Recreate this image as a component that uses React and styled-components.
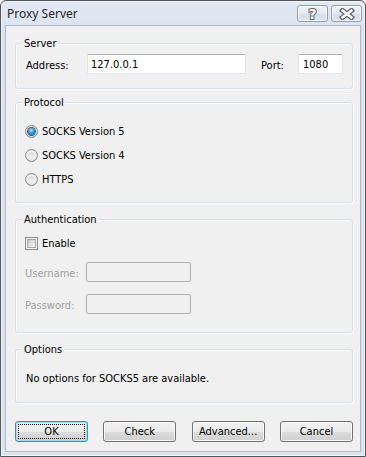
import React from 'react';
import styled, { createGlobalStyle, css } from 'styled-components';

const GlobalStyle = createGlobalStyle`
  html, body {
    margin: 0;
    padding: 0;
    width: 366px;
    height: 457px;
    overflow: hidden;
    background: #ffffff;
  }
`;

const uiFont = `'DejaVu Sans Condensed', 'DejaVu Sans', sans-serif`;

const Window = styled.div`
  width: 366px;
  height: 457px;
  box-sizing: border-box;
  border: 1px solid #50565e;
  border-radius: 6px 6px 0 0;
  background: linear-gradient(#e2eaf4, #d9e3ef 30px, #d9e3ef);
  box-shadow: inset 0 0 0 1px rgba(255, 255, 255, 0.65);
  display: flex;
  flex-direction: column;
  font-family: ${uiFont};
  font-size: 11px;
  color: #000;
`;

const TitleBar = styled.div`
  height: 24px;
  flex: none;
  display: flex;
  align-items: flex-start;
  padding: 0 3px 0 6px;
`;

const Title = styled.div`
  flex: 1;
  margin-top: 5px;
  font-family: 'Noto Sans', 'Open Sans', sans-serif;
  font-size: 12px;
  line-height: 16px;
  color: #262626;
`;

const CaptionButtons = styled.div`
  display: flex;
  gap: 3px;
  margin-top: 4px;
`;

const CaptionButton = styled.div`
  width: 31px;
  height: 17px;
  box-sizing: border-box;
  border: 1px solid #8f9eb1;
  border-radius: 3px;
  background: linear-gradient(#f1f5fa, #e1e8f1 50%, #d6dfea 51%, #dce4ee);
  box-shadow: inset 0 0 0 1px rgba(255, 255, 255, 0.7);
  display: flex;
  align-items: center;
  justify-content: center;
`;

const HelpGlyph = styled.span`
  font-family: 'DejaVu Sans', sans-serif;
  font-weight: bold;
  font-size: 14px;
  line-height: 14px;
  color: #ffffff;
  -webkit-text-stroke: 2px #5c6470;
  paint-order: stroke fill;
`;

const Client = styled.div`
  flex: 1;
  margin: 0 4px 4px 4px;
  border: 1px solid #aebbcb;
  background: #f0f0f0;
  padding: 17px 7px 0 9px;
  display: flex;
  flex-direction: column;
`;

const GroupBox = styled.div`
  box-sizing: border-box;
  height: ${(p) => p.$h}px;
  margin-top: ${(p) => p.$top || 0}px;
  border: 1px solid #d5dfe5;
  border-radius: 3px;
  box-shadow: inset 1px 1px 0 #ffffff, 1px 1px 0 #ffffff;
  padding: 0 9px 0 9px;
  display: flex;
  flex-direction: column;
`;

const Legend = styled.div`
  align-self: flex-start;
  height: 13px;
  line-height: 13px;
  margin: -7px 0 0 -3px;
  padding: 0 2px;
  background: #f0f0f0;
`;

const Row = styled.div`
  display: flex;
  align-items: center;
  height: ${(p) => p.$h || 20}px;
  margin-top: ${(p) => p.$top || 0}px;
`;

const Label = styled.div`
  width: ${(p) => p.$w}px;
  margin-left: ${(p) => p.$left || 0}px;
  margin-top: 2px;
  flex: none;
  color: ${(p) => (p.$disabled ? '#a0a0a0' : '#000')};
`;

const TextBox = styled.input`
  box-sizing: border-box;
  width: ${(p) => p.$w}px;
  height: ${(p) => p.$h || 20}px;
  margin: 0;
  padding: 1px 0 0 ${(p) => p.$pad || 3}px;
  font-family: ${uiFont};
  font-size: 11px;
  color: #000;
  border: 1px solid;
  border-color: #abadb3 #e2e3ea #e3e9ef #e2e3ea;
  border-radius: 2px;
  background: #ffffff;
  outline: none;
  &:disabled {
    border-color: #adb2b5;
    background: #f0f0f0;
  }
`;

const OptionList = styled.div`
  margin-top: 10px;
`;

const OptionRow = styled.label`
  display: flex;
  align-items: center;
  height: 24px;
  gap: 4px;
`;

const Radio = styled.span`
  width: 13px;
  height: 13px;
  box-sizing: border-box;
  border-radius: 50%;
  border: 1px solid #8a8a8a;
  background: radial-gradient(circle at 50% 35%, #ffffff 0%, #f0f0f0 45%, #cfcfcf 100%);
  display: flex;
  align-items: center;
  justify-content: center;
  flex: none;
  &::after {
    content: '';
    width: 7px;
    height: 7px;
    border-radius: 50%;
    ${(p) =>
      p.$checked
        ? css`
            background: radial-gradient(circle at 45% 35%, #bfe6ff 0%, #3d9ae0 40%, #0d4f8f 100%);
            box-shadow: 0 0 0 1px #2e5e8e;
          `
        : css`
            background: linear-gradient(#d9d9d9, #f4f4f4);
          `}
  }
`;

const Checkbox = styled.span`
  width: 13px;
  height: 13px;
  box-sizing: border-box;
  border: 1px solid #8e8f8f;
  background: #f4f4f4;
  padding: 1px;
  flex: none;
  &::after {
    content: '';
    display: block;
    width: 9px;
    height: 9px;
    border: 1px solid #a9a9a9;
    box-sizing: border-box;
    background: linear-gradient(135deg, #c4c4c4, #e4e4e4 60%, #f6f6f6);
  }
`;

const Note = styled.div`
  margin: 15px 0 0 1px;
  line-height: 16px;
`;

const ButtonBar = styled.div`
  display: flex;
  justify-content: space-between;
  margin: 18px 0 0 0;
  width: 338px;
`;

const Button = styled.div`
  position: relative;
  width: 73px;
  height: 21px;
  box-sizing: border-box;
  border: 1px solid ${(p) => (p.$default ? '#3c8ed1' : '#707070')};
  border-radius: 3px;
  background: linear-gradient(#f2f2f2, #ebebeb 50%, #dddddd 51%, #cfcfcf);
  box-shadow: inset 0 0 0 1px ${(p) => (p.$default ? '#9fdcf8' : 'rgba(255,255,255,0.8)')};
  display: flex;
  align-items: center;
  justify-content: center;
  line-height: 14px;
  ${(p) =>
    p.$default &&
    css`
      &::after {
        content: '';
        position: absolute;
        inset: 2px;
        border: 1px dotted #000;
      }
    `}
`;

const CloseGlyph = () => (
  <svg width="16" height="12" viewBox="0 0 16 12">
    <path d="M3.5 2.5 L12.5 9.5 M12.5 2.5 L3.5 9.5" stroke="#5c6470" strokeWidth="5" strokeLinecap="square" fill="none" />
    <path d="M3.5 2.5 L12.5 9.5 M12.5 2.5 L3.5 9.5" stroke="#ffffff" strokeWidth="2.6" strokeLinecap="square" fill="none" />
  </svg>
);

export default function App() {
  return (
    <>
      <GlobalStyle />
      <Window>
        <TitleBar>
          <Title>Proxy Server</Title>
          <CaptionButtons>
            <CaptionButton>
              <HelpGlyph>?</HelpGlyph>
            </CaptionButton>
            <CaptionButton>
              <CloseGlyph />
            </CaptionButton>
          </CaptionButtons>
        </TitleBar>
        <Client>
          <GroupBox $h={46}>
            <Legend>Server</Legend>
            <Row $top={4}>
              <Label $w={61} $left={1}>Address:</Label>
              <TextBox $w={160} defaultValue="127.0.0.1" />
              <Label $w={37} $left={15}>Port:</Label>
              <TextBox $w={45} $pad={4} defaultValue="1080" />
            </Row>
          </GroupBox>

          <GroupBox $h={101} $top={13}>
            <Legend>Protocol</Legend>
            <OptionList>
              <OptionRow>
                <Radio $checked />
                SOCKS Version 5
              </OptionRow>
              <OptionRow>
                <Radio />
                SOCKS Version 4
              </OptionRow>
              <OptionRow>
                <Radio />
                HTTPS
              </OptionRow>
            </OptionList>
          </GroupBox>

          <GroupBox $h={114} $top={16}>
            <Legend>Authentication</Legend>
            <Row $h={24} $top={5}>
              <OptionRow>
                <Checkbox />
                Enable
              </OptionRow>
            </Row>
            <Row $top={7}>
              <Label $w={61} $disabled>Username:</Label>
              <TextBox $w={105} disabled />
            </Row>
            <Row $top={12}>
              <Label $w={61} $disabled>Password:</Label>
              <TextBox $w={105} disabled />
            </Row>
          </GroupBox>

          <GroupBox $h={54} $top={16}>
            <Legend>Options</Legend>
            <Note>No options for SOCKS5 are available.</Note>
          </GroupBox>

          <ButtonBar>
            <Button $default>OK</Button>
            <Button>Check</Button>
            <Button>Advanced...</Button>
            <Button>Cancel</Button>
          </ButtonBar>
        </Client>
      </Window>
    </>
  );
}
